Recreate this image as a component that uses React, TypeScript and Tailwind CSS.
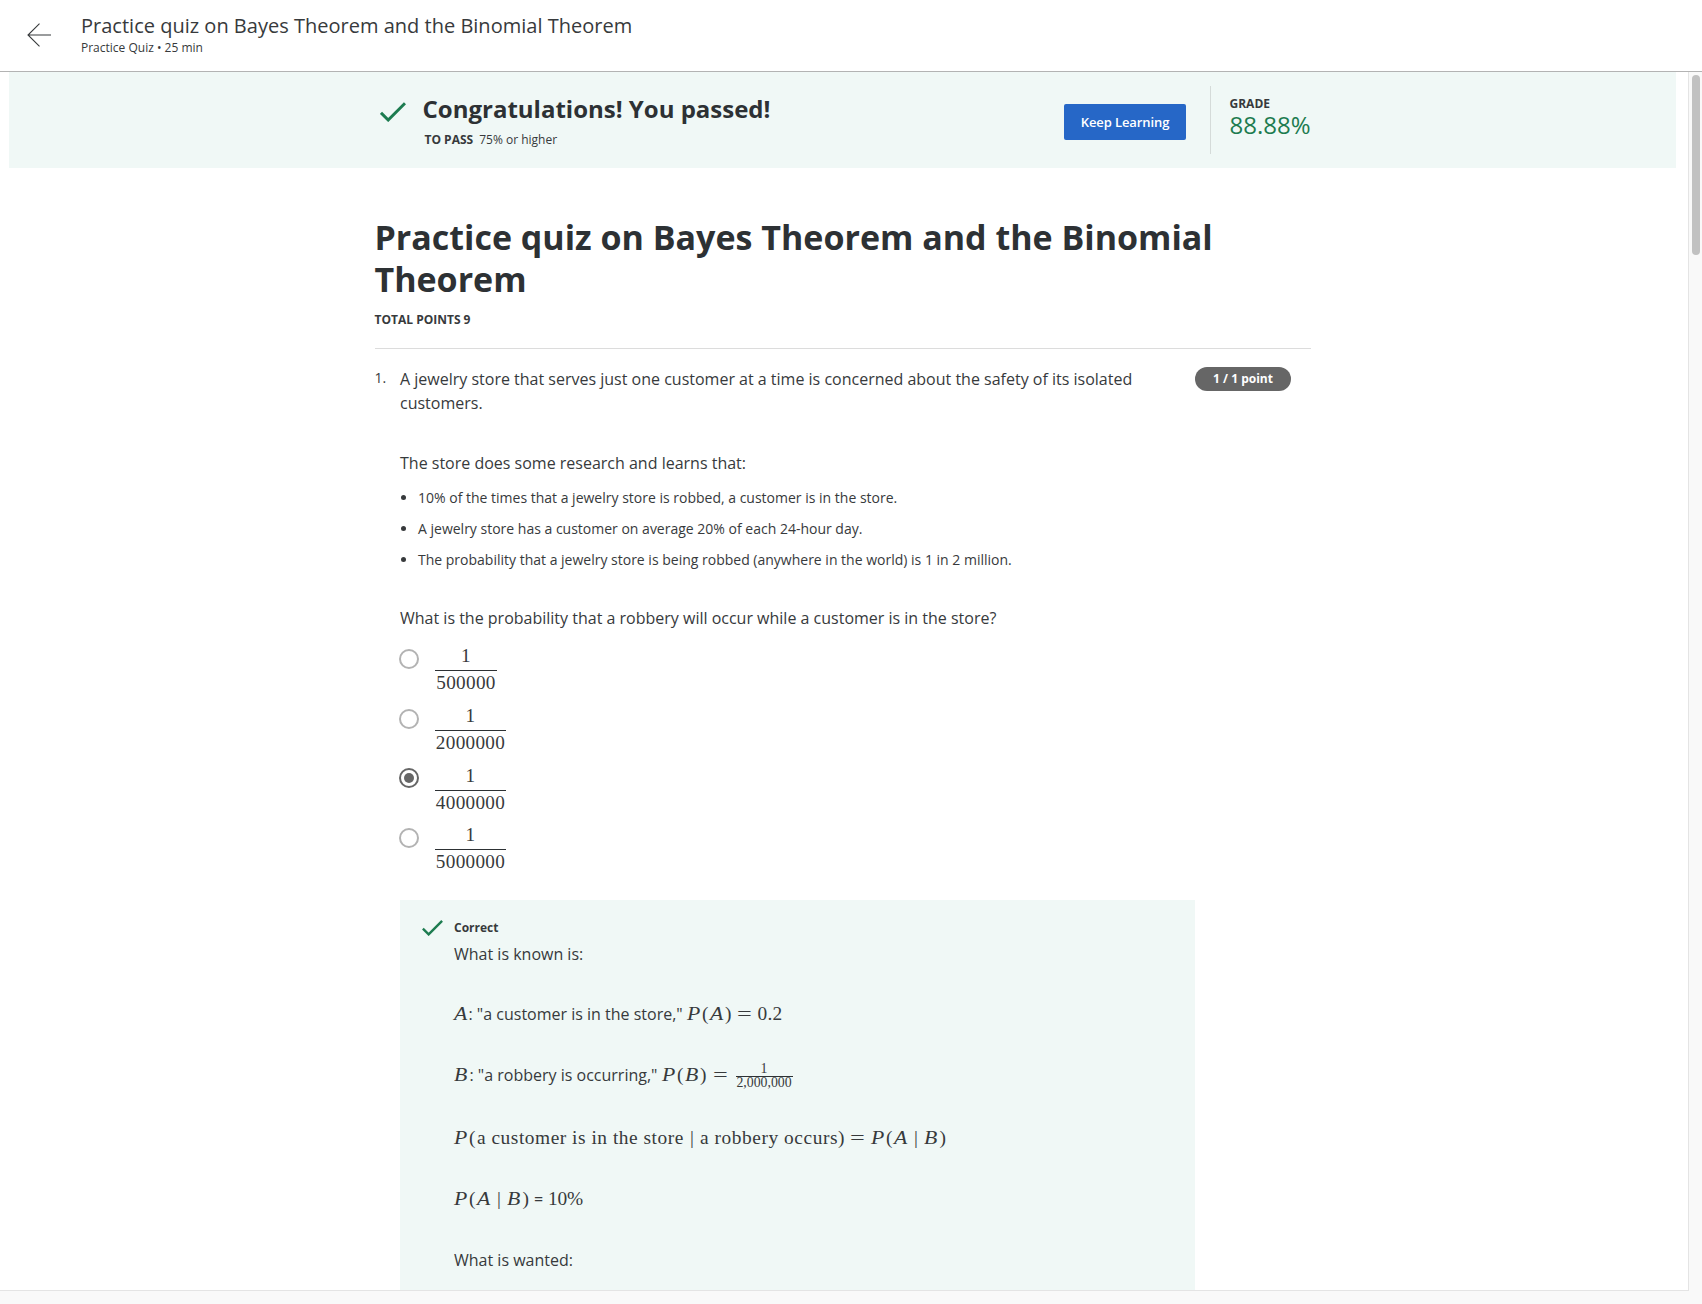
import React from "react";

function Check({ className }: { className: string }) {
  return (
    <svg viewBox="0 0 26 20" fill="none" stroke="#1d7c50" strokeWidth="3" className={className}>
      <path d="M1 10.8 L8.2 18 L25 1.2" />
    </svg>
  );
}

/* One math token; its className sets the box width. */
function Tok({ children, className }: { children: React.ReactNode; className: string }) {
  return (
    <span className={`inline-block shrink-0 whitespace-pre font-['Liberation_Serif',serif] text-[19.4px] leading-6 ${className}`}>
      {children}
    </span>
  );
}

function Var({ children, className }: { children: React.ReactNode; className: string }) {
  return (
    <Tok className={className}>
      <span className="inline-block origin-left scale-x-[1.12] italic">{children}</span>
    </Tok>
  );
}

const options = [
  { value: "500000", bar: "w-[62px]", radio: "mt-[5px]", row: "mb-[9px]" },
  { value: "2000000", bar: "w-[71px]", radio: "mt-[5px]", row: "mb-[9px]" },
  { value: "4000000", bar: "w-[71px]", radio: "mt-[4px]", row: "mb-[8px]", checked: true },
  { value: "5000000", bar: "w-[71px]", radio: "mt-[5px]", row: "" },
];

const facts = [
  { text: "10% of the times that a jewelry store is robbed, a customer is in the store." },
  { text: "A jewelry store has a customer on average 20% of each 24-hour day." },
  { text: "The probability that a jewelry store is being robbed (anywhere in the world) is 1 in 2 million." },
];

export default function App() {
  return (
    <div className="flex h-[1304px] w-[1702px] flex-col overflow-hidden bg-white font-['Open_Sans',sans-serif] text-[#373a3c]">
      <header className="flex h-[72px] shrink-0 border-b border-[#b3b3b3] pl-[27px]">
        <svg viewBox="0 0 24 24" fill="none" stroke="#373a3c" strokeWidth="1.1" className="mt-[23px] h-6 w-6">
          <path d="M24 12 H1 M12.5 0.7 L1 12 L12.5 23.3" />
        </svg>
        <div className="ml-[30px]">
          <div className="mt-[13px] h-[26px] whitespace-nowrap text-[20px] leading-[26px] tracking-[0.01px]">
            Practice quiz on Bayes Theorem and the Binomial Theorem
          </div>
          <div className="text-[12px] leading-[18px]">Practice Quiz • 25 min</div>
        </div>
      </header>

      <div className="flex min-h-0 flex-1">
        <div className="flex w-[1689px] shrink-0 flex-col">
          <main className="h-[1218px] overflow-hidden border-r border-[#e4e4e4]">
            <section className="ml-[9px] flex h-24 w-[1667px] bg-[#f0f8f6] pl-[371px]">
              <Check className="mt-[30px] h-5 w-[26px]" />
              <div className="ml-[16.5px] w-[641.5px]">
                <h2 className="mt-[19px] text-[24px] font-bold leading-9 text-[#2d3134]">Congratulations! You passed!</h2>
                <div className="mt-[4px] flex gap-[6px] pl-[2px] text-[12px] leading-[18px]">
                  <b>TO PASS</b>
                  <span>75% or higher</span>
                </div>
              </div>
              <button className="mt-8 h-9 w-[122px] rounded-[2px] bg-[#2667c7] pt-[2px] text-[13px] font-semibold tracking-[-0.1px] text-white">
                Keep Learning
              </button>
              <div className="ml-[24px] mt-[14px] h-[68px] border-l border-[#d5dbd9] pl-[18.5px]">
                <div className="mt-[10px] text-[12px] font-bold leading-[16px]">GRADE</div>
                <div className="text-[24px] leading-[26px] text-[#1d7c50]">88.88%</div>
              </div>
            </section>

            <article className="ml-[374.5px] w-[936.5px] pt-12">
              <h1 className="text-[34px] font-bold leading-[42px] text-[#2d3134]">
                Practice quiz on Bayes Theorem and the Binomial Theorem
              </h1>
              <div className="mt-[11px] text-[12px] font-bold leading-[18px]">TOTAL POINTS 9</div>
              <hr className="mt-[19px] border-t border-[#dcdcdc]" />

              <div className="mt-[18px] flex">
                <div className="w-[25.5px] shrink-0 text-[14px] leading-[22px]">1.</div>
                <div className="w-[795px] shrink-0 text-[16px] leading-6">
                  <p className="w-[760px]">
                    A jewelry store that serves just one customer at a time is concerned about the safety of its isolated customers.
                  </p>
                  <p className="mt-9">The store does some research and learns that:</p>
                  <ul className="mt-3 flex flex-col gap-[10px] text-[14px] leading-[21px]">
                    {facts.map((f) => (
                      <li key={f.text} className="flex items-center">
                        <span className="ml-px mr-3 h-[5px] w-[5px] rounded-full bg-[#373a3c]" />
                        {f.text}
                      </li>
                    ))}
                  </ul>
                  <p className="mt-9">What is the probability that a robbery will occur while a customer is in the store?</p>

                  <div className="mt-[14px]">
                    {options.map((o) => (
                      <label key={o.value} className={`flex ${o.row}`}>
                        <span
                          className={`-ml-px flex h-5 w-5 items-center justify-center rounded-full border-2 ${o.radio} ${
                            o.checked ? "border-[#666]" : "border-[#b3b3b3]"
                          }`}
                        >
                          {o.checked && <span className="h-[10px] w-[10px] rounded-full bg-[#666]" />}
                        </span>
                        <span className={`ml-4 flex flex-col items-center font-['Liberation_Serif',serif] text-[19.2px] tracking-[0.3px] ${o.bar}`}>
                          <span className="h-6">1</span>
                          <span className="mt-[2px] h-px w-full bg-[#2d3134]" />
                          <span className="h-6">{o.value}</span>
                        </span>
                      </label>
                    ))}
                  </div>

                  <section className="mt-[26px] flex h-[500px] bg-[#f0f8f6] pl-[21.5px] pt-[19.5px]">
                    <Check className="h-4 w-[21px]" />
                    <div className="-mt-[0.5px] ml-[11.5px]">
                      <div className="text-[12px] font-bold leading-[18px]">Correct</div>
                      <p className="mt-[5px]">What is known is:</p>

                      <div className="mt-[36px] flex h-6 items-baseline">
                        <Var className="w-[14.5px]">A</Var>
                        <span className="w-[218.5px] whitespace-nowrap">: "a customer is in the store,"</span>
                        <Var className="w-[15px]">P</Var>
                        <Tok className="w-[8px]">(</Tok>
                        <Var className="w-[15px]">A</Var>
                        <Tok className="w-[12px]">)</Tok>
                        <Tok className="w-[20.5px]"><span className="inline-block origin-left scale-x-[1.35]">=</span></Tok>
                        <Tok className="w-8 tracking-[0.2px]">0.2</Tok>
                      </div>

                      <div className="mt-[37px] flex h-6 items-baseline">
                        <Var className="w-[15.5px]">B</Var>
                        <span className="w-[192.5px] whitespace-nowrap">: "a robbery is occurring,"</span>
                        <Var className="w-[15px]">P</Var>
                        <Tok className="w-[8px]">(</Tok>
                        <Var className="w-[15px]">B</Var>
                        <Tok className="w-[13px]">)</Tok>
                        <Tok className="w-[22.5px]"><span className="inline-block origin-left scale-x-[1.35]">=</span></Tok>
                        <span className="flex w-[57px] flex-col items-center self-start font-['Liberation_Serif',serif] text-[13.8px] leading-[12px]">
                          <span>1</span>
                          <span className="mt-px h-px w-full bg-[#2d3134]" />
                          <span>2,000,000</span>
                        </span>
                      </div>

                      <div className="mt-[39px] flex h-6 items-baseline">
                        <Var className="w-[15px]">P</Var>
                        <Tok className="w-[8px]">(</Tok>
                        <Tok className="w-[213px] tracking-[0.52px]">a customer is in the store</Tok>
                        <Tok className="w-[10px]">|</Tok>
                        <Tok className="w-[138px] tracking-[0.55px]">a robbery occurs</Tok>
                        <Tok className="w-[12px]">)</Tok>
                        <Tok className="w-[21px]"><span className="inline-block origin-left scale-x-[1.35]">=</span></Tok>
                        <Var className="w-[15px]">P</Var>
                        <Tok className="w-[8px]">(</Tok>
                        <Var className="w-5">A</Var>
                        <Tok className="w-[10px]">|</Tok>
                        <Var className="w-[15.5px]">B</Var>
                        <Tok className="w-2">)</Tok>
                      </div>

                      <div className="mt-[37px] flex h-6 items-baseline">
                        <Var className="w-[15px]">P</Var>
                        <Tok className="w-[8px]">(</Tok>
                        <Var className="w-5">A</Var>
                        <Tok className="w-[10px]">|</Tok>
                        <Var className="w-[15.5px]">B</Var>
                        <Tok className="w-[11.5px]">)</Tok>
                        <span className="w-[14px]">=</span>
                        <Tok className="w-[40px] tracking-[-0.2px]">10%</Tok>
                      </div>

                      <p className="mt-[37px]">What is wanted:</p>
                    </div>
                  </section>
                </div>
                <div className="h-6 w-24 shrink-0 rounded-full bg-[#666] text-center text-[12px] font-bold leading-6 text-white">
                  1 / 1 point
                </div>
              </div>
            </article>
          </main>
          <div className="h-[14px] border-t border-[#e4e4e4] bg-[#f9f9f9]" />
        </div>
        <aside className="flex-1 bg-[#f9f9f9] pl-[3px] pt-[3px]">
          <div className="h-[180px] w-2 rounded-full bg-[#c1c1c1]" />
        </aside>
      </div>
    </div>
  );
}
